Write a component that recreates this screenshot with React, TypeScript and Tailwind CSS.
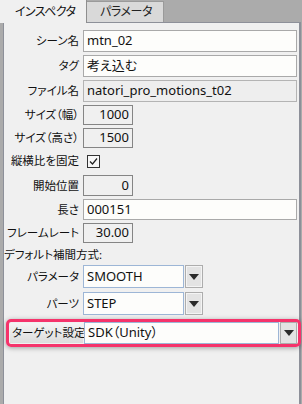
import React from "react";

const font = "font-['Noto_Sans','Noto_Sans_CJK_JP',sans-serif] [font-feature-settings:'palt'] whitespace-nowrap";

const Label = ({ text }: { text: string }) => (
  <div className="flex w-[75px] shrink-0 justify-end">
    <span className="shrink-0 text-[11.5px] leading-none text-[#111]">{text}</span>
  </div>
);

const TextBox = ({ value, readOnly }: { value: string; readOnly?: boolean }) => (
  <div
    className={`ml-[4px] mr-[2px] flex h-full flex-1 items-center border px-[3px] text-[13px] text-[#111] ${
      readOnly ? "border-[#b4b4b4] bg-[#eeeeee]" : "border-[#a9a9a9] bg-[#fdfdfb]"
    }`}
  >
    {value}
  </div>
);

const NumBox = ({ value }: { value: string }) => (
  <div className="ml-[4px] flex h-full w-[50px] items-center justify-end border border-[#858585] bg-[#f0f0f0] pr-[3px] text-[13px] text-[#111]">
    {value}
  </div>
);

const Arrow = () => (
  <svg width="10" height="6" viewBox="0 0 10 6">
    <path d="M0 0H10L5 6Z" fill="#2a2a2a" />
  </svg>
);

const Select = ({ value, w }: { value: string; w: string }) => (
  <div className={`ml-[4px] flex h-full ${w}`}>
    <div className="flex flex-1 items-center border border-[#9db6d6] bg-[#fdfdfb] px-[3px] text-[13px] text-[#111]">
      {value}
    </div>
    <div className="ml-px flex w-[18px] items-center justify-center border border-[#adadad] bg-[#e3e3e3] shadow-[inset_0_0_0_1px_#f4f4f4]">
      <Arrow />
    </div>
  </div>
);

const Row = ({ h, mt, children }: { h: string; mt: string; children: React.ReactNode }) => (
  <div className={`flex items-center ${h} ${mt}`}>{children}</div>
);

export default function App() {
  return (
    <div className={`h-[404px] w-[302px] overflow-hidden bg-[#ababab] ${font}`}>
      <div className="flex h-[22px] items-end">
        <div className="relative z-10 mb-[-1px] flex h-[23px] w-[87px] shrink-0 items-center border-r border-[#8e8e8e] bg-[#f0f0f0] pl-[15px] text-[12px] tracking-[-0.6px] text-[#111]">
          インスペクタ
        </div>
        <div className="flex h-[21px] w-[77px] shrink-0 items-center border-r border-t border-[#9a9a9a] bg-[#d9d9d9] pl-[13px] text-[12px] tracking-[-0.4px] text-[#222]">
          パラメータ
        </div>
      </div>
      <div className="ml-[3px] h-[382px] w-[298px] border-l border-r-2 border-t border-[#8d9099] bg-[#f0f0f0]">
        <Row h="h-[22px]" mt="mt-[7px]">
          <Label text="シーン名" />
          <TextBox value="mtn_02" />
        </Row>
        <Row h="h-[22px]" mt="mt-[3px]">
          <Label text="タグ" />
          <TextBox value="考え込む" />
        </Row>
        <Row h="h-[22px]" mt="mt-[3px]">
          <Label text="ファイル名" />
          <TextBox value="natori_pro_motions_t02" readOnly />
        </Row>
        <Row h="h-[20px]" mt="mt-[3px]">
          <Label text="サイズ（幅）" />
          <NumBox value="1000" />
        </Row>
        <Row h="h-[20px]" mt="mt-[3px]">
          <Label text="サイズ（高さ）" />
          <NumBox value="1500" />
        </Row>
        <Row h="h-[20px]" mt="mt-[3px]">
          <Label text="縦横比を固定" />
          <div className="ml-[8px] flex h-[13px] w-[13px] items-center justify-center border border-[#333] bg-[#f8f8f8]">
            <svg width="11" height="11" viewBox="0 0 11 11">
              <path d="M2 5.5L4.5 8L9 2.5" stroke="#222" strokeWidth="1.2" fill="none" />
            </svg>
          </div>
        </Row>
        <Row h="h-[21px]" mt="mt-[4px]">
          <Label text="開始位置" />
          <NumBox value="0" />
        </Row>
        <Row h="h-[21px]" mt="mt-[3px]">
          <Label text="長さ" />
          <TextBox value="000151" />
        </Row>
        <Row h="h-[20px]" mt="mt-[3px]">
          <Label text="フレームレート" />
          <NumBox value="30.00" />
        </Row>
        <div className="mt-[3px] h-[17px] text-[11.5px] leading-[17px] text-[#111]">デフォルト補間方式:</div>
        <Row h="h-[23px]" mt="mt-[2px]">
          <Label text="パラメータ" />
          <Select value="SMOOTH" w="w-[120px]" />
        </Row>
        <Row h="h-[23px]" mt="mt-[4px]">
          <Label text="パーツ" />
          <Select value="STEP" w="w-[120px]" />
        </Row>
        <div className="relative z-10 ml-[2px] mt-[4px] flex h-[28px] w-[295px] items-center rounded-[5px] border-[3px] border-[#f5336b] p-px shadow-[0_1px_5px_rgba(0,0,0,0.35)]">
          <div className="flex h-[20px] w-[73px] items-center bg-gradient-to-b from-[#f4f4f4] to-[#dcdcdc] pl-[2px] text-[11.5px] text-[#111]">
            ターゲット設定
          </div>
          <div className="ml-px flex h-[22px] flex-1">
            <div className="flex flex-1 items-center border border-[#9db6d6] bg-[#fdfdfb] px-[3px] text-[13px] text-[#111]">
              SDK（Unity）
            </div>
            <div className="ml-px flex w-[17px] items-center justify-center border border-[#adadad] bg-[#e3e3e3]">
              <Arrow />
            </div>
          </div>
        </div>
      </div>
    </div>
  );
}
